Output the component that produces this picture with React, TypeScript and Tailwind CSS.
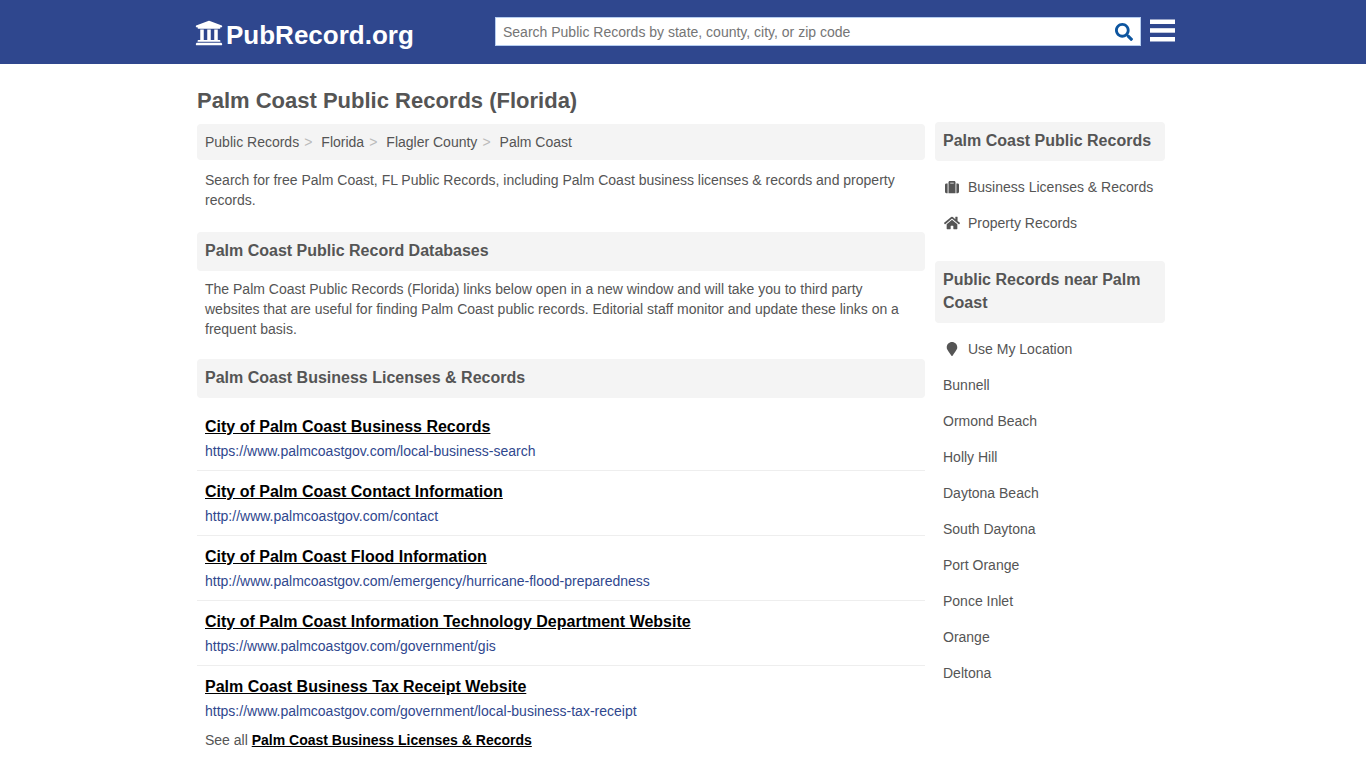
import type { ReactNode } from "react";
import { FaHome, FaMapMarker, FaSearch, FaSuitcase, FaUniversity } from "react-icons/fa";

const crumbs = ["Public Records", "Florida", "Flagler County", "Palm Coast"];

const records = [
  { title: "City of Palm Coast Business Records", url: "https://www.palmcoastgov.com/local-business-search" },
  { title: "City of Palm Coast Contact Information", url: "http://www.palmcoastgov.com/contact" },
  { title: "City of Palm Coast Flood Information", url: "http://www.palmcoastgov.com/emergency/hurricane-flood-preparedness" },
  { title: "City of Palm Coast Information Technology Department Website", url: "https://www.palmcoastgov.com/government/gis" },
  { title: "Palm Coast Business Tax Receipt Website", url: "https://www.palmcoastgov.com/government/local-business-tax-receipt" },
];

const places = [
  "Bunnell",
  "Ormond Beach",
  "Holly Hill",
  "Daytona Beach",
  "South Daytona",
  "Port Orange",
  "Ponce Inlet",
  "Orange",
  "Deltona",
];

function MenuIcon() {
  return (
    <svg viewBox="0 0 25 23" className="h-[23px] w-[25px]" fill="currentColor" aria-hidden="true">
      <rect y="0.5" width="25" height="4.5" />
      <rect y="9.2" width="25" height="4.5" />
      <rect y="18" width="25" height="4.5" />
    </svg>
  );
}

function SectionHeading({ children }: { children: ReactNode }) {
  return (
    <h2 className="rounded bg-[#f4f4f4] px-2 pt-[7px] pb-[9px] text-base leading-[23px] font-bold">{children}</h2>
  );
}

function SideLink({ icon, children }: { icon?: ReactNode; children: ReactNode }) {
  return (
    <li>
      <a href="#" className="flex items-center px-2 py-2">
        {icon && <span className="mr-[7px] flex w-[18px] justify-center">{icon}</span>}
        {children}
      </a>
    </li>
  );
}

export default function App() {
  return (
    <div className="min-h-screen bg-white font-['Liberation_Sans',Arial,sans-serif] text-sm leading-5 text-[#555]">
      <header className="bg-[#2f478e]">
        <div className="mx-auto flex h-16 max-w-[984px] items-start justify-between pl-1">
          <a href="#" className="flex items-center gap-[3px] pt-[19px] text-[26px] leading-[30px] font-bold text-white">
            <FaUniversity className="mb-[3px] size-7" />
            PubRecord.org
          </a>
          <div className="flex w-[680px] items-start justify-between">
            <form
              className="mt-[17px] flex h-[29px] w-[646px] items-center border border-[#b5cdf0] bg-white"
              onSubmit={(e) => e.preventDefault()}
            >
              <input
                type="text"
                aria-label="Search Public Records"
                placeholder="Search Public Records by state, county, city, or zip code"
                className="h-full min-w-0 flex-1 px-[7px] text-sm outline-none placeholder:text-[#757575]"
              />
              <button type="submit" aria-label="Search" className="px-[7px] text-lg text-[#0d559f]">
                <FaSearch />
              </button>
            </form>
            <button type="button" aria-label="Menu" className="mt-[19px] text-white">
              <MenuIcon />
            </button>
          </div>
        </div>
      </header>

      <div className="mx-auto max-w-[980px] pr-2 pl-1">
        <h1 className="pt-[23px] text-[22px] leading-7 font-bold">Palm Coast Public Records (Florida)</h1>
        <div className="flex items-start gap-[10px] pt-[7px]">
          <main className="mt-[2px] min-w-0 flex-1">
            <nav aria-label="Breadcrumb" className="rounded bg-[#f4f4f4] p-2">
              <ol className="flex">
                {crumbs.map((crumb, i) => (
                  <li key={crumb} className="flex">
                    <a href="#">{crumb}</a>
                    {i < crumbs.length - 1 && <span className="pr-[9px] pl-[5px] text-[#bbb]">&gt;</span>}
                  </li>
                ))}
              </ol>
            </nav>
            <p className="px-2 pt-[10px] pb-[22px]">
              Search for free Palm Coast, FL Public Records, including Palm Coast business licenses &amp; records and
              property records.
            </p>
            <SectionHeading>Palm Coast Public Record Databases</SectionHeading>
            <p className="px-2 pt-2 pb-5">
              The Palm Coast Public Records (Florida) links below open in a new window and will take you to third party
              websites that are useful for finding Palm Coast public records. Editorial staff monitor and update these
              links on a frequent basis.
            </p>
            <SectionHeading>Palm Coast Business Licenses &amp; Records</SectionHeading>
            <ul className="pt-2">
              {records.map((record) => (
                <li key={record.url} className="border-b border-[#eee] px-2 py-[9px] last:border-0">
                  <a href="#" className="block">
                    <span className="block text-base leading-6 font-bold text-black underline">{record.title}</span>
                    <span className="block pt-[2px] text-[#2f478e]">{record.url}</span>
                  </a>
                </li>
              ))}
            </ul>
            <p className="px-2 pb-5">
              See all{" "}
              <a href="#" className="font-bold text-black underline">
                Palm Coast Business Licenses &amp; Records
              </a>
            </p>
          </main>

          <aside className="w-[230px] shrink-0">
            <SectionHeading>Palm Coast Public Records</SectionHeading>
            <ul className="pt-2 pb-5">
              <SideLink icon={<FaSuitcase className="size-[14px]" />}>Business Licenses &amp; Records</SideLink>
              <SideLink icon={<FaHome className="size-4" />}>Property Records</SideLink>
            </ul>
            <SectionHeading>Public Records near Palm Coast</SectionHeading>
            <ul className="pt-2">
              <SideLink icon={<FaMapMarker className="size-[14px]" />}>Use My Location</SideLink>
              {places.map((place) => (
                <SideLink key={place}>{place}</SideLink>
              ))}
            </ul>
          </aside>
        </div>
      </div>
    </div>
  );
}
